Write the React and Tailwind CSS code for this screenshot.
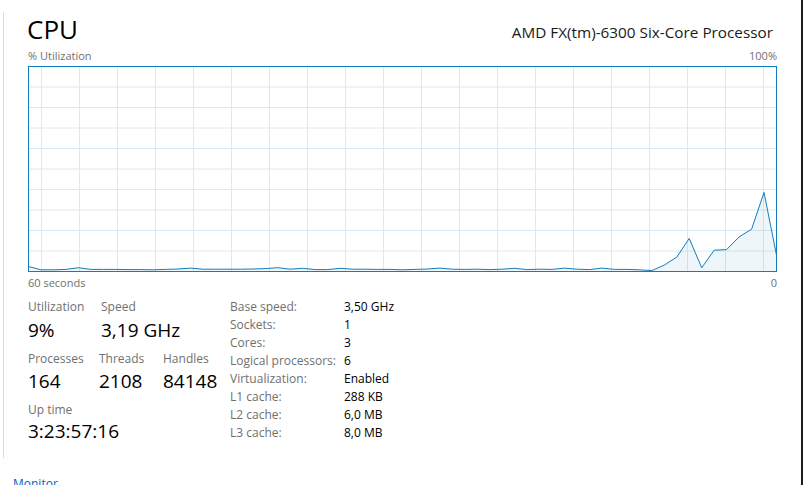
import React from 'react'

const samples = [
  2.2, 0.6, 0.6, 0.8, 1.6, 0.8, 0.8, 0.8, 0.7, 0.7, 0.6, 0.8, 1.0, 1.4, 0.9, 0.9, 0.9, 0.9, 1.0, 1.2,
  1.6, 0.9, 1.3, 0.7, 0.7, 1.3, 0.9, 0.9, 0.8, 0.8, 0.6, 0.8, 1.0, 1.4, 0.9, 0.8, 0.9, 0.7, 0.9, 1.3,
  0.7, 0.9, 0.8, 1.4, 0.9, 0.7, 1.4, 0.8, 0.8, 0.6, 0.2, 2.9, 6.8, 16, 1.6, 10.2, 10.5, 16.7, 20.5, 38.5,
  7.8,
]

const specs = [
  ['Base speed:', '3,50 GHz'],
  ['Sockets:', '1'],
  ['Cores:', '3'],
  ['Logical processors:', '6'],
  ['Virtualization:', 'Enabled'],
  ['L1 cache:', '288 KB'],
  ['L2 cache:', '6,0 MB'],
  ['L3 cache:', '8,0 MB'],
]

const font = { fontFamily: '"Segoe UI", "Open Sans", "Noto Sans", sans-serif' }

function Chart() {
  const W = 749
  const H = 206
  const pts = samples.map((v, i) => [0.5 + (i * 748) / 60, 205 - (v / 100) * 204])
  const line = pts.map(([x, y]) => `${x.toFixed(1)},${y.toFixed(1)}`).join(' ')
  const area = `0.5,205 ${line} 748.5,205`
  return (
    <svg width={W} height={H} viewBox={`0 0 ${W} ${H}`} className="block">
      {Array.from({ length: 9 }, (_, k) => (
        <line key={'h' + k} x1="1" x2="748" y1={0.5 + (k + 1) * 20.5} y2={0.5 + (k + 1) * 20.5} stroke="#d9eaf4" />
      ))}
      {Array.from({ length: 20 }, (_, j) => (
        <line key={'v' + j} y1="1" y2="205" x1={13.5 + j * 38} x2={13.5 + j * 38} stroke="#d9eaf4" />
      ))}
      <polygon points={area} fill="#117dbb" fillOpacity="0.07" />
      <polyline points={line} fill="none" stroke="#117dbb" strokeWidth="1" />
      <rect x="0.5" y="0.5" width="748" height="205" fill="none" stroke="#117dbb" />
    </svg>
  )
}

function Stat({ label, value, w = '', gap = 'mt-0' }) {
  return (
    <div className={w}>
      <div className="text-[12px] leading-[16px] text-[#707070]">{label}</div>
      <div className={`text-[19px] leading-[26px] text-black ${gap}`}>{value}</div>
    </div>
  )
}

export default function App() {
  return (
    <div className="w-[803px] h-[485px] bg-white flex overflow-hidden" style={font}>
      <div className="flex-1 flex flex-col">
        <div className="shrink-0 ml-[3px] mt-[12px] h-[446px] border-l border-[#dcdcdc] pl-[24px] pr-[24px]">
          <div className="flex items-end justify-between h-[34px]">
            <div className="text-[26px] leading-[34px] text-black -ml-[1px]">CPU</div>
            <div className="text-[15.3px] leading-[20px] text-[#1a1a1a] mb-[4px] mr-[4px]">AMD FX(tm)-6300 Six-Core Processor</div>
          </div>
          <div className="flex justify-between h-[20px] items-center text-[11px] text-[#707070]">
            <span>% Utilization</span>
            <span>100%</span>
          </div>
          <Chart />
          <div className="flex justify-between h-[22px] items-center text-[11px] text-[#707070]">
            <span>60 seconds</span>
            <span>0</span>
          </div>
          <div className="flex mt-[5px]">
            <div className="w-[202px] flex flex-col">
              <div className="flex">
                <Stat label="Utilization" value="9%" w="w-[73px]" gap="mt-[2px]" />
                <Stat label="Speed" value="3,19 GHz" gap="mt-[2px]" />
              </div>
              <div className="flex mt-[8px]">
                <Stat label="Processes" value="164" w="w-[71px]" gap="mt-[1px]" />
                <Stat label="Threads" value="2108" w="w-[64px]" gap="mt-[1px]" />
                <Stat label="Handles" value="84148" gap="mt-[1px]" />
              </div>
              <div className="flex mt-[8px]">
                <Stat label="Up time" value="3:23:57:16" />
              </div>
            </div>
            <div className="flex flex-col -mt-[1px]">
              {specs.map(([k, v]) => (
                <div key={k} className="flex text-[12px] leading-[18px]">
                  <span className="w-[114px] text-[#707070]">{k}</span>
                  <span className="text-black">{v}</span>
                </div>
              ))}
            </div>
          </div>
        </div>
        <div className="shrink-0 ml-[13px] mt-[18px] text-[12px] leading-[16px] text-[#0066cc]">Monitor</div>
      </div>
      <div className="w-[2px] bg-[#1c1c1c]" />
    </div>
  )
}
